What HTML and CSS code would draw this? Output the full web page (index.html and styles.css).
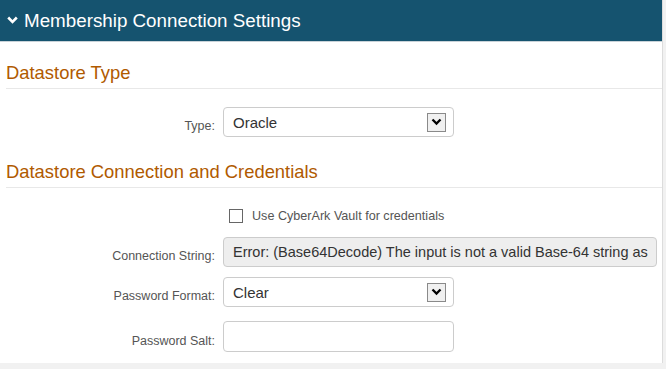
FILE: index.html
```html
<!DOCTYPE html>
<html lang="en">
<head>
    <meta charset="UTF-8">
    <title>Membership Connection Settings</title>
    <link rel="stylesheet" href="styles.css">
</head>
<body>
<div class="panel">
    <div class="panel-head">
        <svg class="chev" width="11" height="8" viewBox="0 0 11 8"><path d="M1.2 1.5 L5.5 5.8 L9.8 1.5" fill="none" stroke="#fff" stroke-width="2.6"/></svg>
        <span>Membership Connection Settings</span>
    </div>
    <div class="panel-body">
        <h3 class="section">Datastore Type</h3>
        <div class="row first">
            <label class="lbl">Type:</label>
            <div class="select">
                <span>Oracle</span>
                <i class="drop"><svg width="11" height="8" viewBox="0 0 11 8"><path d="M1.5 1.5 L5.5 5.5 L9.5 1.5" fill="none" stroke="#000" stroke-width="2.3"/></svg></i>
            </div>
        </div>
        <h3 class="section second">Datastore Connection and Credentials</h3>
        <div class="row check-row">
            <span class="lbl"></span>
            <label class="check"><i class="box"></i>Use CyberArk Vault for credentials</label>
        </div>
        <div class="row conn">
            <label class="lbl">Connection String:</label>
            <div class="input wide disabled">Error: (Base64Decode) The input is not a valid Base-64 string as</div>
        </div>
        <div class="row">
            <label class="lbl">Password Format:</label>
            <div class="select">
                <span>Clear</span>
                <i class="drop"><svg width="11" height="8" viewBox="0 0 11 8"><path d="M1.5 1.5 L5.5 5.5 L9.5 1.5" fill="none" stroke="#000" stroke-width="2.3"/></svg></i>
            </div>
        </div>
        <div class="row salt">
            <label class="lbl">Password Salt:</label>
            <div class="input"></div>
        </div>
    </div>
</div>
</body>
</html>
```

FILE: styles.css
```css
body {
    margin: 0;
    background: #f1f1f1;
    font-family: "Liberation Sans", Arial, sans-serif;
    height: 369px;
    overflow: hidden;
}
.panel {
    width: 662px;
    height: 363px;
    background: #fff;
    border-right: 1px solid #dcdcdc;
}
.panel-head {
    height: 41px;
    background: #15536f;
    border-bottom: 1px solid #c8d2d8;
    color: #fff;
    font-size: 18.8px;
    display: flex;
    align-items: center;
    padding-left: 7px;
}
.chev {
    margin-right: 6px;
    margin-top: -1px;
}
.panel-body {
    padding: 0 0 0 6px;
}
.section {
    margin: 0;
    padding: 20px 0 4px;
    font-size: 18.4px;
    font-weight: normal;
    color: #b05a00;
    border-bottom: 1px solid #e8e8e8;
}
.section.second {
    padding-top: 24px;
}
.row {
    display: flex;
    align-items: center;
    margin-top: 10px;
}
.row.first {
    margin-top: 18px;
}
.row.conn {
    margin-top: 14px;
}
.row.salt {
    margin-top: 14px;
}
.lbl {
    width: 209px;
    text-align: right;
    padding-right: 8px;
    padding-top: 8px;
    font-size: 12.5px;
    color: #555;
}
.select, .input {
    box-sizing: border-box;
    width: 231px;
    height: 30px;
    border: 1px solid #ccc;
    border-radius: 4px;
    display: flex;
    align-items: center;
    padding-left: 9px;
    font-size: 15px;
    color: #333;
}
.salt .input {
    height: 31px;
}
.select span {
    flex: 1;
}
.drop {
    width: 17px;
    height: 17px;
    border: 1px solid #8a8a8a;
    background: #f0f0f0;
    margin-right: 7px;
    display: flex;
    align-items: center;
    justify-content: center;
}
.input.wide {
    width: 434px;
    font-size: 14.5px;
    white-space: nowrap;
    overflow: hidden;
}
.disabled {
    background: #eee;
}
.check-row {
    margin-top: 21px;
}
.check-row .lbl {
    padding-top: 0;
}
.check {
    display: flex;
    align-items: center;
    font-size: 12.6px;
    color: #555;
    margin-left: 6px;
}
.box {
    width: 12px;
    height: 12px;
    border: 1px solid #666;
    margin-right: 9px;
}
```
